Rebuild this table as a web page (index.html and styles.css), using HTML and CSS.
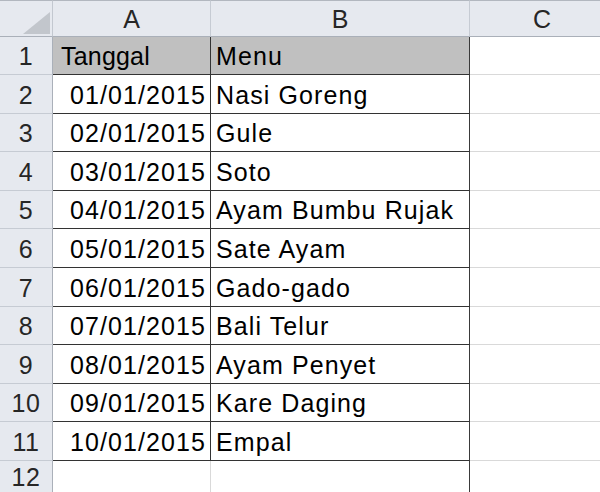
FILE: index.html
```html
<!DOCTYPE html>
<html>
<head>
<meta charset="utf-8">
<link rel="stylesheet" href="styles.css">
</head>
<body>
<div class="sheet">
  <div class="corner"><svg class="tri" width="27" height="22" viewBox="0 0 27 22"><polygon points="0,22 27,22 27,0" fill="#c2c6cc"/></svg></div>
  <div class="ch">A</div><div class="ch">B</div><div class="ch last">C</div>

  <div class="rh">1</div><div class="c a t hdr">Tanggal</div><div class="c b t hdr">Menu</div><div class="c"></div>
  <div class="rh">2</div><div class="c a t num">01/01/2015</div><div class="c b t">Nasi Goreng</div><div class="c"></div>
  <div class="rh">3</div><div class="c a t num">02/01/2015</div><div class="c b t">Gule</div><div class="c"></div>
  <div class="rh">4</div><div class="c a t num">03/01/2015</div><div class="c b t">Soto</div><div class="c"></div>
  <div class="rh">5</div><div class="c a t num">04/01/2015</div><div class="c b t">Ayam Bumbu Rujak</div><div class="c"></div>
  <div class="rh">6</div><div class="c a t num">05/01/2015</div><div class="c b t">Sate Ayam</div><div class="c"></div>
  <div class="rh">7</div><div class="c a t num">06/01/2015</div><div class="c b t">Gado-gado</div><div class="c"></div>
  <div class="rh">8</div><div class="c a t num">07/01/2015</div><div class="c b t">Bali Telur</div><div class="c"></div>
  <div class="rh">9</div><div class="c a t num">08/01/2015</div><div class="c b t">Ayam Penyet</div><div class="c"></div>
  <div class="rh">10</div><div class="c a t num">09/01/2015</div><div class="c b t">Kare Daging</div><div class="c"></div>
  <div class="rh">11</div><div class="c a t num">10/01/2015</div><div class="c b t">Empal</div><div class="c"></div>
  <div class="rh end">12</div><div class="c a"></div><div class="c b"></div><div class="c"></div>
</div>
</body>
</html>
```

FILE: styles.css
```css
html, body {
  margin: 0;
  padding: 0;
  background: #ffffff;
  overflow: hidden;
  width: 600px;
  height: 492px;
}

.sheet {
  display: grid;
  grid-template-columns: 53px 158px 259px 145px;
  grid-template-rows: 37px 38px repeat(11, 38.6px);
  font-family: "Liberation Sans", Arial, sans-serif;
  font-size: 25px;
  letter-spacing: 1.1px;
  color: #000;
  line-height: 28px;
  width: 615px;
}

.sheet > div {
  box-sizing: border-box;
  border-right: 1px solid #d9d9d9;
  border-bottom: 1px solid #d9d9d9;
  display: flex;
  align-items: flex-end;
  padding-bottom: 4px;
  white-space: nowrap;
  overflow: hidden;
}

.sheet > .corner {
  background: #e6e9ef;
  border-top: 1px solid #b2b7bf;
  border-right: 1px solid #c3c8d0;
  border-bottom: 1px solid #aab0b9;
  justify-content: flex-end;
  align-items: flex-end;
  padding: 0 2px 2px 0;
}

.tri {
  display: block;
}

.sheet > .ch {
  background: #e6e9ef;
  border-top: 1px solid #b2b7bf;
  border-right: 1px solid #c6cbd3;
  border-bottom: 1px solid #aab0b9;
  justify-content: center;
  align-items: center;
  padding: 0;
  color: #262626;
  letter-spacing: 0;
}

.sheet > .rh {
  background: #e6e9ef;
  border-right: 1px solid #aab0b9;
  border-bottom: 1px solid #c6cbd3;
  justify-content: center;
  color: #262626;
  letter-spacing: 0.6px;
  padding-bottom: 4px;
}

.sheet > .rh.end {
  padding-bottom: 8px;
}

.sheet > .t {
  border-bottom: 1px solid #333333;
}

.sheet > .a.t {
  border-right: 1px solid #333333;
}

.sheet > .b.t {
  border-right: 1px solid #3a3a3a;
}

.sheet > .b {
  border-right: 1px solid #3a3a3a;
  padding-left: 5px;
}

.sheet > .num {
  justify-content: flex-end;
  padding-right: 4px;
}

.sheet > .hdr {
  background: #c0c0c0;
  padding-left: 5px;
}

.sheet > .a.hdr {
  padding-left: 8px;
  letter-spacing: 0.2px;
}

.sheet > .a {
  padding-right: 4px;
}
```
